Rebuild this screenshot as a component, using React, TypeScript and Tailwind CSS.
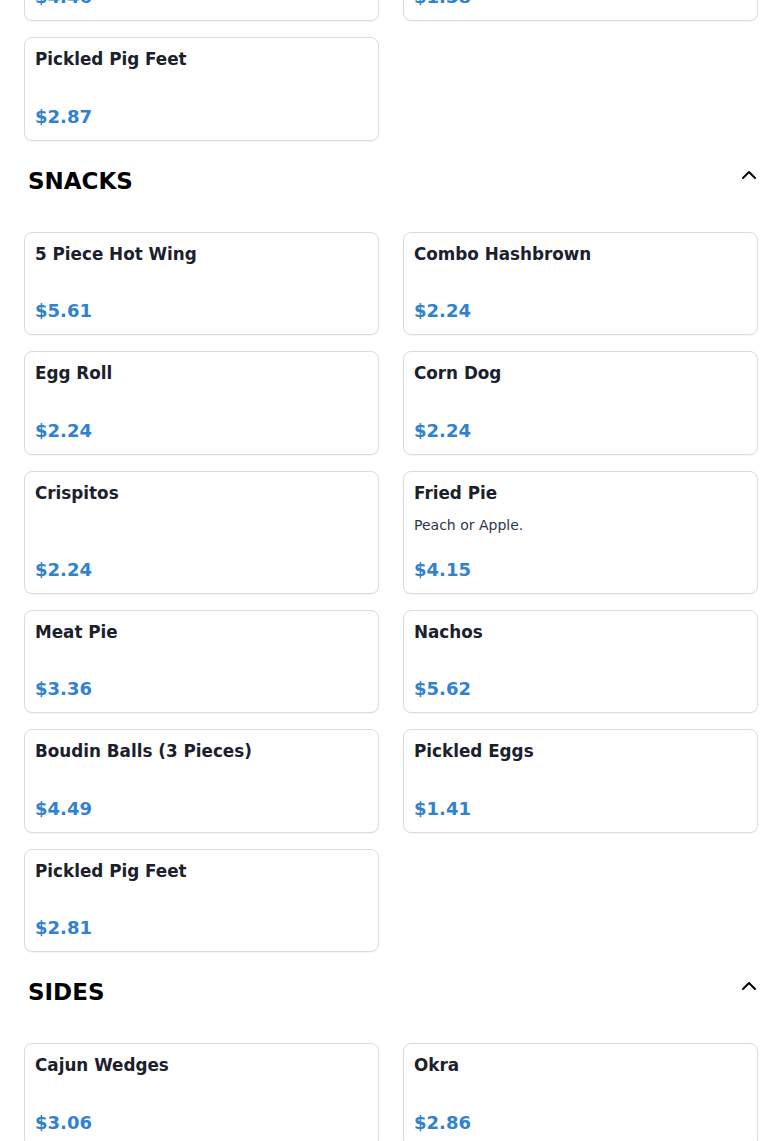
import { ChevronUp } from 'lucide-react'

type Item = {
  name: string
  price: string
  description?: string
}

type Section = {
  title?: string
  items: Item[]
}

const sections: Section[] = [
  {
    items: [
      { name: 'Boudin Balls (3 Pieces)', price: '$4.46' },
      { name: 'Pickled Eggs', price: '$1.38' },
      { name: 'Pickled Pig Feet', price: '$2.87' },
    ],
  },
  {
    title: 'SNACKS',
    items: [
      { name: '5 Piece Hot Wing', price: '$5.61' },
      { name: 'Combo Hashbrown', price: '$2.24' },
      { name: 'Egg Roll', price: '$2.24' },
      { name: 'Corn Dog', price: '$2.24' },
      { name: 'Crispitos', price: '$2.24' },
      { name: 'Fried Pie', price: '$4.15', description: 'Peach or Apple.' },
      { name: 'Meat Pie', price: '$3.36' },
      { name: 'Nachos', price: '$5.62' },
      { name: 'Boudin Balls (3 Pieces)', price: '$4.49' },
      { name: 'Pickled Eggs', price: '$1.41' },
      { name: 'Pickled Pig Feet', price: '$2.81' },
    ],
  },
  {
    title: 'SIDES',
    items: [
      { name: 'Cajun Wedges', price: '$3.06' },
      { name: 'Okra', price: '$2.86' },
      { name: 'Fried Mushrooms', price: '$3.06' },
      { name: 'Onion Rings', price: '$3.06' },
    ],
  },
]

function MenuCard({ name, price, description }: Item) {
  return (
    <div className="flex flex-col rounded-lg border border-[#dcdcdc] bg-white p-2.5 shadow-[0_1px_1px_rgba(0,0,0,0.04)]">
      <h3 className="pt-px text-[16.8px] leading-[20.4px] font-bold text-[#1a202c]">{name}</h3>
      <div className="mt-3">
        {description && <p className="text-sm leading-5 text-[#2d3748]">{description}</p>}
      </div>
      <p className="mt-auto pt-[21px] text-lg leading-[27px] font-bold text-[#3182ce]">{price}</p>
    </div>
  )
}

export default function App() {
  return (
    <div className="min-h-screen overflow-hidden bg-white font-['DejaVu_Sans',sans-serif]">
      <div className="-mt-[82px] px-6 pb-10">
        {sections.map((section, i) => (
          <div key={i}>
            {section.title && (
              <div className="mt-[26px] mb-9 flex items-start justify-between pl-1">
                <h2 className="text-[23px] leading-[29px] font-bold text-black">{section.title}</h2>
                <ChevronUp className="-mt-1 -mr-[3px] h-6 w-6 text-black" strokeWidth={2} />
              </div>
            )}
            <div className="grid grid-cols-2 gap-x-6 gap-y-4">
              {section.items.map((item, j) => (
                <MenuCard key={j} {...item} />
              ))}
            </div>
          </div>
        ))}
      </div>
    </div>
  )
}
